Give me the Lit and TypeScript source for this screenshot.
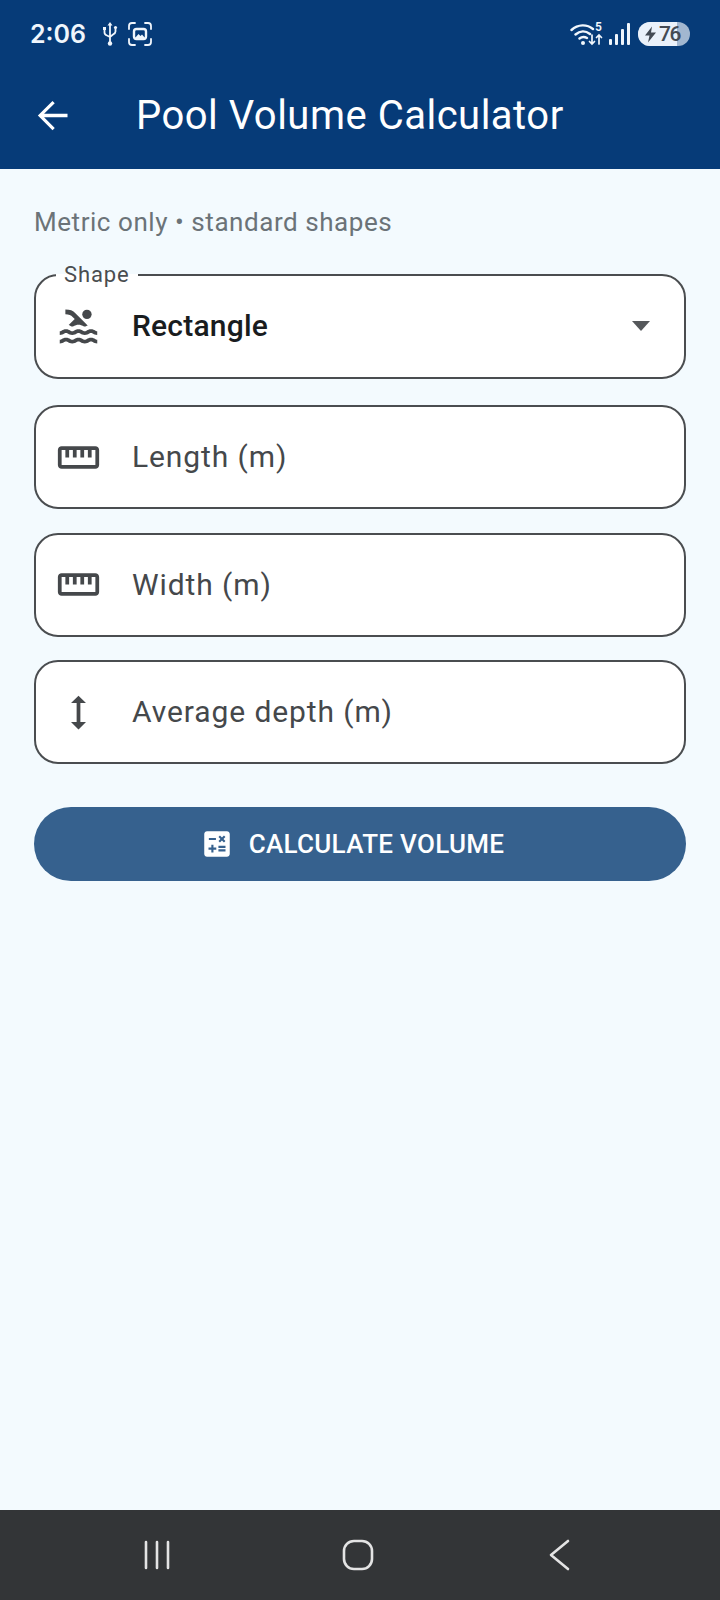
import {LitElement, css, html, svg} from 'lit';
import {customElement} from 'lit/decorators.js';

const swim = svg`<path d="M22 21c-1.11 0-1.73-.37-2.18-.64-.37-.22-.6-.36-1.15-.36-.56 0-.78.13-1.15.36-.46.27-1.07.64-2.18.64s-1.73-.37-2.18-.64c-.37-.22-.6-.36-1.15-.36-.56 0-.78.13-1.15.36-.46.27-1.08.64-2.19.64-1.11 0-1.73-.37-2.18-.64-.37-.23-.6-.36-1.15-.36s-.78.13-1.15.36c-.46.27-1.08.64-2.19.64v-2c.56 0 .78-.13 1.15-.36.46-.27 1.08-.64 2.19-.64s1.73.37 2.18.64c.37.23.59.36 1.15.36.56 0 .78-.13 1.15-.36.46-.27 1.08-.64 2.19-.64 1.11 0 1.73.37 2.18.64.37.22.6.36 1.15.36s.78-.13 1.15-.36c.45-.27 1.07-.64 2.18-.64s1.73.37 2.18.64c.37.23.59.36 1.15.36v2zm0-4.5c-1.11 0-1.73-.37-2.18-.64-.37-.22-.6-.36-1.15-.36-.56 0-.78.13-1.15.36-.45.27-1.07.64-2.18.64s-1.73-.37-2.18-.64c-.37-.22-.6-.36-1.15-.36-.56 0-.78.13-1.15.36-.45.27-1.07.64-2.18.64s-1.73-.37-2.18-.64c-.37-.22-.6-.36-1.15-.36s-.78.13-1.15.36c-.47.27-1.09.64-2.2.64v-2c.56 0 .78-.13 1.15-.36.45-.27 1.07-.64 2.18-.64s1.73.37 2.18.64c.37.22.6.36 1.15.36.56 0 .78-.13 1.15-.36.45-.27 1.07-.64 2.18-.64s1.73.37 2.18.64c.37.22.6.36 1.15.36s.78-.13 1.15-.36c.45-.27 1.07-.64 2.18-.64s1.73.37 2.18.64c.37.22.6.36 1.15.36v2zM8.67 12c.56 0 .78-.13 1.15-.36.46-.27 1.08-.64 2.19-.64 1.11 0 1.73.37 2.18.64.37.22.6.36 1.15.36s.78-.13 1.15-.36c.12-.07.26-.15.41-.23L10.48 5C8.93 3.45 7.5 2.99 5 3v2.5c1.82-.01 2.89.39 4 1.5l1 1-3.25 3.25c.31.12.56.27.77.39.37.23.59.36 1.15.36z"/><circle cx="16.5" cy="5.5" r="2.5"/>`;
const ruler = svg`<path d="M21 6H3c-1.1 0-2 .9-2 2v8c0 1.1.9 2 2 2h18c1.1 0 2-.9 2-2V8c0-1.1-.9-2-2-2zm0 10H3V8h2v4h2V8h2v4h2V8h2v4h2V8h2v4h2V8h2v8z"/>`;
const height = svg`<path d="M13 6.99h3L12 3 8 6.99h3v10.02H8L12 21l4-3.99h-3z"/>`;
const calc = svg`<path d="M19 3H5c-1.1 0-2 .9-2 2v14c0 1.1.9 2 2 2h14c1.1 0 2-.9 2-2V5c0-1.1-.9-2-2-2zm-5.97 4.06L14.09 6l1.41 1.41L16.91 6l1.06 1.06-1.41 1.41 1.41 1.41-1.06 1.06-1.41-1.4-1.41 1.41-1.06-1.06 1.41-1.41-1.41-1.42zm-6.78.66h5v1.5h-5v-1.5zM11.5 16h-2v2H8v-2H6v-1.5h2v-2h1.5v2h2V16zm6.5 1.25h-5v-1.5h5v1.5zm0-2.5h-5v-1.5h5v1.5z"/>`;

const Fields = [
  {label: 'Length (m)', icon: ruler},
  {label: 'Width (m)', icon: ruler},
  {label: 'Average depth (m)', icon: height},
];

@customElement('app-root')
export class AppRoot extends LitElement {
  static styles = css`
    :host {
      display: flex;
      flex-direction: column;
      height: 1600px;
      font-family: Roboto, sans-serif;
      background: #f3fafe;
    }

    svg {
      display: block;
      flex: none;
    }

    .top {
      background: #063b78;
      color: #fff;
      height: 169px;
      flex: none;
      display: flex;
      flex-direction: column;
    }

    .status {
      height: 68px;
      padding: 0 30px;
      display: flex;
      align-items: center;
      color: #f0f6fc;
    }

    .time {
      font: 600 25px Inter, sans-serif;
      width: 72px;
    }

    .shot {
      margin-left: 10px;
    }

    .status-right {
      margin-left: auto;
      display: flex;
      align-items: center;
    }

    .signal {
      margin-left: 6px;
    }

    .battery {
      position: relative;
      width: 52px;
      height: 24px;
      border-radius: 12px;
      margin-left: 8px;
      overflow: hidden;
      background: #a2b7d0;
      color: #434a54;
      font: 500 21px/24px Roboto, sans-serif;
      display: flex;
      align-items: center;
      gap: 2px;
      padding-left: 6px;
      box-sizing: border-box;
    }

    .battery-fill {
      position: absolute;
      left: 0;
      top: 0;
      bottom: 0;
      width: 39px;
      background: #eaf1fa;
    }

    .battery svg,
    .battery span {
      position: relative;
    }

    .battery span {
      letter-spacing: -1.5px;
    }

    .appbar {
      flex: 1;
      display: flex;
      align-items: center;
      padding: 0 0 6px 30px;
    }

    .title {
      font-size: 40px;
      font-weight: 400;
      margin-left: 61px;
      letter-spacing: 0.5px;
    }

    .content {
      flex: 1;
      padding: 38px 34px 0;
      display: flex;
      flex-direction: column;
    }

    .hint {
      font-size: 26px;
      line-height: 30px;
      color: #6b7378;
      letter-spacing: 0.55px;
      margin-bottom: 30px;
    }

    .field {
      margin: 0 0 23.5px;
      padding: 0;
      min-inline-size: 0;
      box-sizing: border-box;
      height: 104px;
      background: #fff;
      border: 2px solid #4a4d50;
      border-radius: 24px;
      display: flex;
      align-items: center;
      color: #45484b;
    }

    fieldset.field {
      display: block;
      height: 112px;
      margin-bottom: 26px;
    }

    legend {
      margin-left: 20px;
      padding: 0 8px;
      font-size: 22px;
      line-height: 16px;
      height: 16px;
      color: #4a4d50;
      letter-spacing: 0.9px;
    }

    .row {
      display: flex;
      align-items: center;
      width: 100%;
      height: 100%;
    }

    fieldset .row {
      height: 92px;
      margin-top: -3px;
    }

    .icon {
      width: 45px;
      height: 45px;
      margin-left: 20px;
      fill: #45484b;
    }

    .text {
      margin-left: 31px;
      font-size: 30px;
      letter-spacing: 0.9px;
      margin-top: -1px;
    }

    .selected {
      font-weight: 500;
      color: #191c1e;
      letter-spacing: 0.2px;
    }

    .caret {
      width: 18px;
      height: 10px;
      margin-left: auto;
      margin-right: 34px;
      fill: #55585b;
    }

    .button {
      margin-top: 19.5px;
      height: 74px;
      border: 0;
      border-radius: 37px;
      background: #36618e;
      color: #fff;
      display: flex;
      align-items: center;
      justify-content: center;
      font-family: Roboto, sans-serif;
      font-size: 26px;
      font-weight: 500;
      letter-spacing: 0.3px;
      padding: 0 16px 0 0;
      gap: 15px;
    }

    .button svg {
      width: 34px;
      height: 34px;
      fill: #fff;
    }

    .nav {
      flex: none;
      height: 90px;
      padding-right: 4px;
      background: #333537;
      display: flex;
      align-items: center;
      justify-content: center;
    }

    .nav-item {
      width: 201px;
      display: flex;
      justify-content: center;
    }

    .nav svg {
      fill: none;
      stroke: #e4e4e4;
      stroke-width: 2.6;
      stroke-linecap: round;
      stroke-linejoin: round;
    }
  `;

  renderStatus() {
    return html`<div class="status">
      <span class="time">2:06</span>
      <svg width="16" height="24" viewBox="0 0 16 24" fill="none" stroke="#f0f6fc" stroke-width="1.8">
        <path d="M8 2v19M2.5 7v3.5c0 1.5 1 2.5 2.5 3l3 1.5 3-2.5c1.5-.8 2.5-1.6 2.5-3V6.5"/>
        <path d="M8 0l2.5 3.5h-5z" fill="#f0f6fc" stroke="none"/>
        <rect x="1" y="5" width="3" height="3" fill="#f0f6fc" stroke="none"/>
        <circle cx="13.5" cy="5.5" r="1.6" fill="#f0f6fc" stroke="none"/>
        <circle cx="8" cy="21.5" r="2.2" fill="#f0f6fc" stroke="none"/>
      </svg>
      <svg class="shot" width="24" height="24" viewBox="0 0 24 24" fill="none" stroke="#f0f6fc" stroke-width="1.8" stroke-linecap="round">
        <path d="M1 7V4c0-1.700 1.300-3 3-3h3M17 1h3c1.700 0 3 1.300 3 3v3M1 17v3c0 1.700 1.300 3 3 3h3M17 23h3c1.700 0 3-1.300 3-3v-3"/>
        <rect x="6" y="7" width="12" height="10" rx="2.500" stroke-width="2.400"/>
        <path d="M7 16l3.500-4 2 2 1.500-1.500 3 3.500z" fill="#f0f6fc" stroke="none"/>
      </svg>
      <div class="status-right">
        <svg width="33" height="26" viewBox="0 0 33 26" fill="none" stroke="#f0f6fc" stroke-width="2.400" stroke-linecap="round">
          <path d="M1.500 9C8 3 17 3 23 8M5.500 13.500c4.500-4 10-4 14.500-.5M9.500 17.500c2.500-2 5-2 7.500-.5"/>
          <circle cx="13" cy="22" r="2" fill="#f0f6fc" stroke="none"/>
          <path d="M22 14v9M19.500 20.500l2.500 2.500 2.500-2.500M29 23v-9M26.500 16.500l2.500-2.500 2.500 2.500" stroke-width="1.700"/>
          <text x="25" y="9.500" font-size="12" font-weight="600" font-family="Roboto, sans-serif" fill="#f0f6fc" stroke="none">5</text>
        </svg>
        <svg class="signal" width="21" height="23" viewBox="0 0 21 23" fill="#f0f6fc">
          <rect x="0" y="16" width="3" height="6" rx="1"/>
          <rect x="6" y="11" width="3" height="11" rx="1"/>
          <rect x="12" y="6" width="3" height="16" rx="1"/>
          <rect x="18" y="0" width="3" height="22" rx="1"/>
        </svg>
        <div class="battery">
          <div class="battery-fill"></div>
          <svg width="13" height="17" viewBox="0 0 13 16" fill="#434a54"><path d="M8 0L1 9h4.500L4 16l8-10H7z"/></svg>
          <span>76</span>
        </div>
      </div>
    </div>`;
  }

  renderFields() {
    return Fields.map(
      (field) => html`<div class="field">
        <div class="row">
          <svg class="icon" viewBox="0 0 24 24">${field.icon}</svg>
          <span class="text">${field.label}</span>
        </div>
      </div>`
    );
  }

  render() {
    return html`<div class="top">
        ${this.renderStatus()}
        <div class="appbar">
          <svg width="45" height="45" viewBox="0 0 24 24" fill="#fff">
            <path d="M20 11.100H7.500l5.700-5.700L12 4.200 4.200 12l7.800 7.800 1.200-1.200-5.700-5.700H20z"/>
          </svg>
          <span class="title">Pool Volume Calculator</span>
        </div>
      </div>
      <div class="content">
        <div class="hint">Metric only • standard shapes</div>
        <fieldset class="field">
          <legend>Shape</legend>
          <div class="row">
            <svg class="icon" viewBox="0 0 24 24">${swim}</svg>
            <span class="text selected">Rectangle</span>
            <svg class="caret" viewBox="0 0 18 10"><path d="M0 0h18l-9 10z"/></svg>
          </div>
        </fieldset>
        ${this.renderFields()}
        <button class="button">
          <svg viewBox="0 0 24 24">${calc}</svg>
          CALCULATE VOLUME
        </button>
      </div>
      <div class="nav">
        <div class="nav-item">
          <svg width="30" height="30" viewBox="0 0 30 30"><path d="M4 2v26M15 2v26M26 2v26"/></svg>
        </div>
        <div class="nav-item">
          <svg width="32" height="32" viewBox="0 0 32 32"><rect x="2" y="2" width="28" height="28" rx="10"/></svg>
        </div>
        <div class="nav-item">
          <svg width="22" height="32" viewBox="0 0 22 32"><path d="M20 2L3 16l17 14"/></svg>
        </div>
      </div>`;
  }
}
